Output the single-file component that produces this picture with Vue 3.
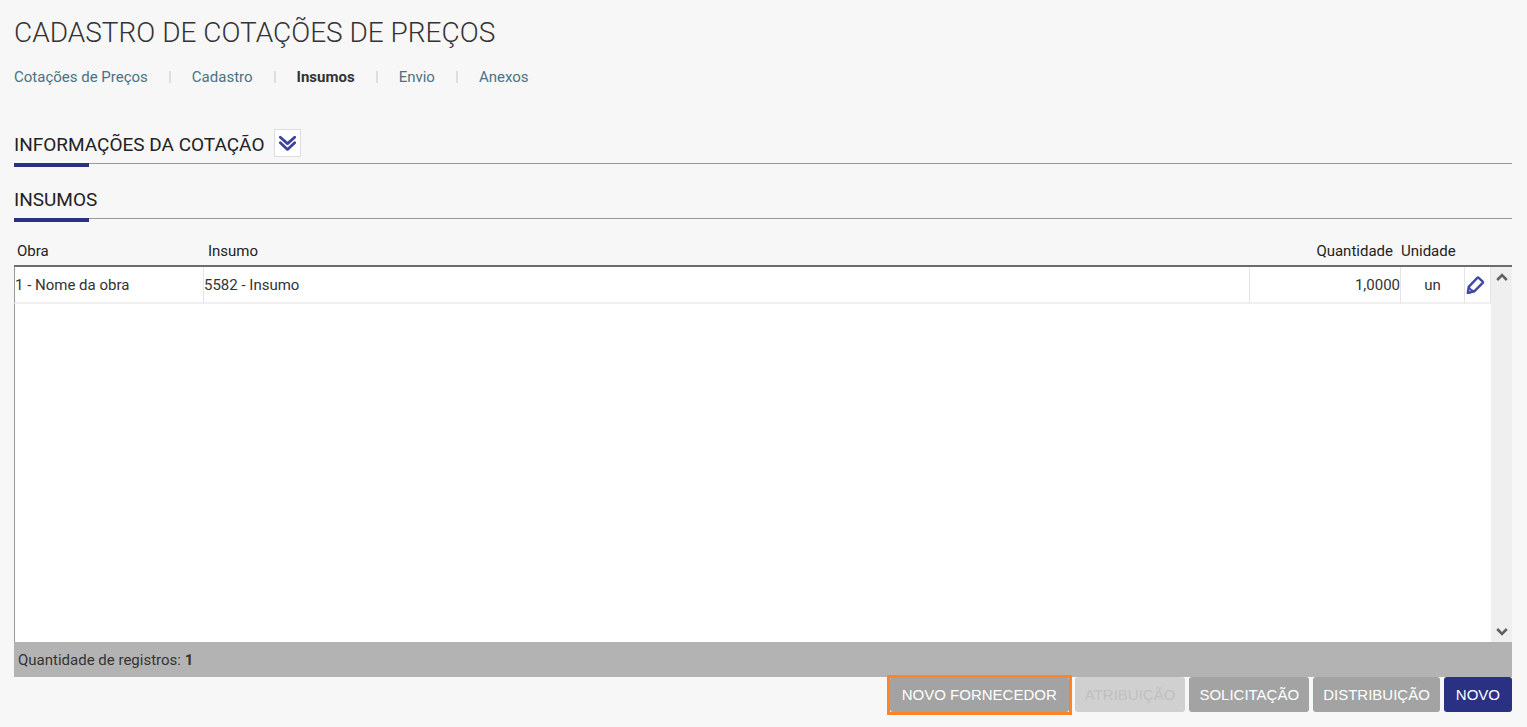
<script setup>
const steps = [
  { label: 'Cotações de Preços' },
  { label: 'Cadastro' },
  { label: 'Insumos', current: true },
  { label: 'Envio' },
  { label: 'Anexos' },
]

const items = [
  { work: '1 - Nome da obra', supply: '5582 - Insumo', quantity: '1,0000', unit: 'un' },
]
</script>

<template>
  <main class="page">
    <h1 class="title">CADASTRO DE COTAÇÕES DE PREÇOS</h1>

    <nav class="steps">
      <template v-for="(step, i) in steps" :key="step.label">
        <span v-if="i" class="divider"></span>
        <a
          href="#"
          :class="['step', { current: step.current }]"
          :aria-current="step.current ? 'page' : undefined"
        >{{ step.label }}</a>
      </template>
    </nav>

    <header class="section info">
      <h2>INFORMAÇÕES DA COTAÇÃO</h2>
      <button type="button" class="expand" aria-label="Expandir">
        <svg width="19" height="18" viewBox="0 0 19 18" fill="none" stroke="#3a449c" stroke-width="2.800" stroke-linecap="round" stroke-linejoin="round">
          <path d="M2.300 3.200 9.500 9.600l7.200-6.400" />
          <path d="M2.300 8.700 9.500 15.400l7.200-6.700" />
        </svg>
      </button>
    </header>

    <header class="section">
      <h2>INSUMOS</h2>
    </header>

    <div class="list">
      <table>
        <colgroup>
          <col class="c-work" />
          <col />
          <col class="c-quantity" />
          <col class="c-unit" />
          <col class="c-edit" />
          <col class="c-scroll" />
        </colgroup>
        <thead>
          <tr>
            <th class="h-work">Obra</th>
            <th class="h-supply">Insumo</th>
            <th class="h-quantity">Quantidade</th>
            <th>Unidade</th>
            <th></th>
            <th></th>
          </tr>
        </thead>
        <tbody>
          <tr v-for="item in items" :key="item.supply">
            <td>{{ item.work }}</td>
            <td>{{ item.supply }}</td>
            <td class="right">{{ item.quantity }}</td>
            <td class="center">{{ item.unit }}</td>
            <td>
              <button type="button" class="edit" aria-label="Editar">
                <svg width="20" height="20" viewBox="0 0 20 20" fill="none" stroke="#3f4aa2" stroke-width="2.400" stroke-linejoin="round">
                  <path d="M12.300 2.900Q13 2.300 13.700 2.900L17.700 6.600Q18.300 7.200 17.700 7.900L9.300 16.400 2.900 17.900 3.700 11.800Z" />
                  <path d="M3.700 11.800 Q5.200 15.200 9.300 16.400" stroke-width="1.800" />
                  <path d="M2.500 15.500 5.500 18 2.300 18.400Z" fill="#3f4aa2" stroke-width="1" />
                </svg>
              </button>
            </td>
            <td></td>
          </tr>
        </tbody>
      </table>
      <div class="rest"></div>
      <div class="scrollbar">
        <button type="button" aria-label="Rolar para cima">
          <svg width="12" height="8" viewBox="0 0 12 8" fill="none" stroke="#606060" stroke-width="2.600"><path d="M1.200 7 6 2.200 10.800 7" /></svg>
        </button>
        <button type="button" aria-label="Rolar para baixo">
          <svg width="12" height="8" viewBox="0 0 12 8" fill="none" stroke="#606060" stroke-width="2.600"><path d="M1.200 1 6 5.800 10.800 1" /></svg>
        </button>
      </div>
    </div>

    <p class="count">Quantidade de registros: <strong>1</strong></p>

    <footer class="actions">
      <button type="button" class="action highlighted">NOVO FORNECEDOR</button>
      <button type="button" class="action" disabled>ATRIBUIÇÃO</button>
      <button type="button" class="action">SOLICITAÇÃO</button>
      <button type="button" class="action">DISTRIBUIÇÃO</button>
      <button type="button" class="action primary">NOVO</button>
    </footer>
  </main>
</template>

<style>
body {
  background: #f7f7f7;
}
</style>

<style scoped>
.page {
  box-sizing: border-box;
  min-height: 100vh;
  padding: 14px 15px 15px 14px;
  display: flex;
  flex-direction: column;
  background: #f7f7f7;
  color: #333;
  font: 15px/20px Roboto, sans-serif;
}

h1, h2, p {
  margin: 0;
}

.title {
  color: #333;
  font-size: 28px;
  font-weight: 300;
  line-height: 38px;
}

.steps {
  display: flex;
  align-items: center;
  gap: 21px;
  margin-top: 15px;
}

.step {
  color: #4a7184;
  text-decoration: none;
}

.step.current {
  color: #333;
  font-weight: 700;
}

.divider {
  width: 2px;
  height: 12px;
  background: #dfdfdf;
}

.section {
  position: relative;
  display: flex;
  align-items: flex-start;
  height: 34px;
  margin-top: 20px;
  border-bottom: 1px solid #999;
}

.section::after {
  content: '';
  position: absolute;
  left: 0;
  top: 34px;
  width: 75px;
  height: 4px;
  background: #2a3183;
}

.section.info {
  margin-top: 42px;
  gap: 10px;
}

.section h2 {
  color: #222;
  font-size: 19px;
  font-weight: 400;
  line-height: 32px;
}

.expand {
  display: grid;
  place-items: center;
  width: 27px;
  height: 28px;
  padding: 0;
  border: 1px solid #ddd;
  background: #fff;
}

.list {
  position: relative;
  flex: 1;
  display: flex;
  flex-direction: column;
  margin-top: 17px;
}

table {
  width: 100%;
  table-layout: fixed;
  border-spacing: 0;
}

.c-work { width: 190px; }
.c-quantity { width: 151px; }
.c-unit { width: 64px; }
.c-edit { width: 26px; }
.c-scroll { width: 21px; }

th {
  height: 29px;
  padding: 0;
  border-bottom: 2px solid #6c6c6c;
  font-weight: 400;
  text-align: left;
  color: #222;
}

th.h-work { padding-left: 3px; }
th.h-supply { padding-left: 4px; }
th.h-quantity { padding-right: 8px; text-align: right; }

td {
  height: 35px;
  padding: 0;
  border-right: 1px solid #e4e4e4;
  border-bottom: 2px solid #f0f0f0;
  background: #fff;
}

td:first-child {
  border-left: 1px solid #999;
}

td.right { text-align: right; }
td.center { text-align: center; }

.edit {
  display: block;
  padding: 0;
  border: 0;
  background: none;
}

.edit svg {
  display: block;
}

.rest {
  flex: 1;
  border-left: 1px solid #999;
  background: #fff;
}

.scrollbar {
  position: absolute;
  top: 31px;
  right: 0;
  bottom: 0;
  width: 21px;
  display: flex;
  flex-direction: column;
  justify-content: space-between;
  background: #efefef;
}

.scrollbar button {
  display: grid;
  place-items: center;
  height: 20px;
  padding: 0;
  border: 0;
  background: none;
}

.count {
  padding: 8px 4px 7px;
  background: #b3b3b3;
}

.actions {
  display: flex;
  justify-content: flex-end;
  gap: 4px;
}

.action {
  position: relative;
  height: 35px;
  padding: 0 10px;
  border: 0;
  border-radius: 3px;
  background: #a3a3a3;
  color: #fff;
  font: 15px/20px "Liberation Sans", Arial, sans-serif;
}

.action:disabled {
  background: #d0d0d0;
  color: #c0c0c0;
}

.action.primary {
  padding: 0 12px;
  background: #2a3183;
}

.action.highlighted {
  margin-right: 2px;
  padding: 0 12px;
}

.highlighted::after {
  content: '';
  position: absolute;
  inset: -2px -3px -3px;
  border: 3px solid #ff8427;
}
</style>
